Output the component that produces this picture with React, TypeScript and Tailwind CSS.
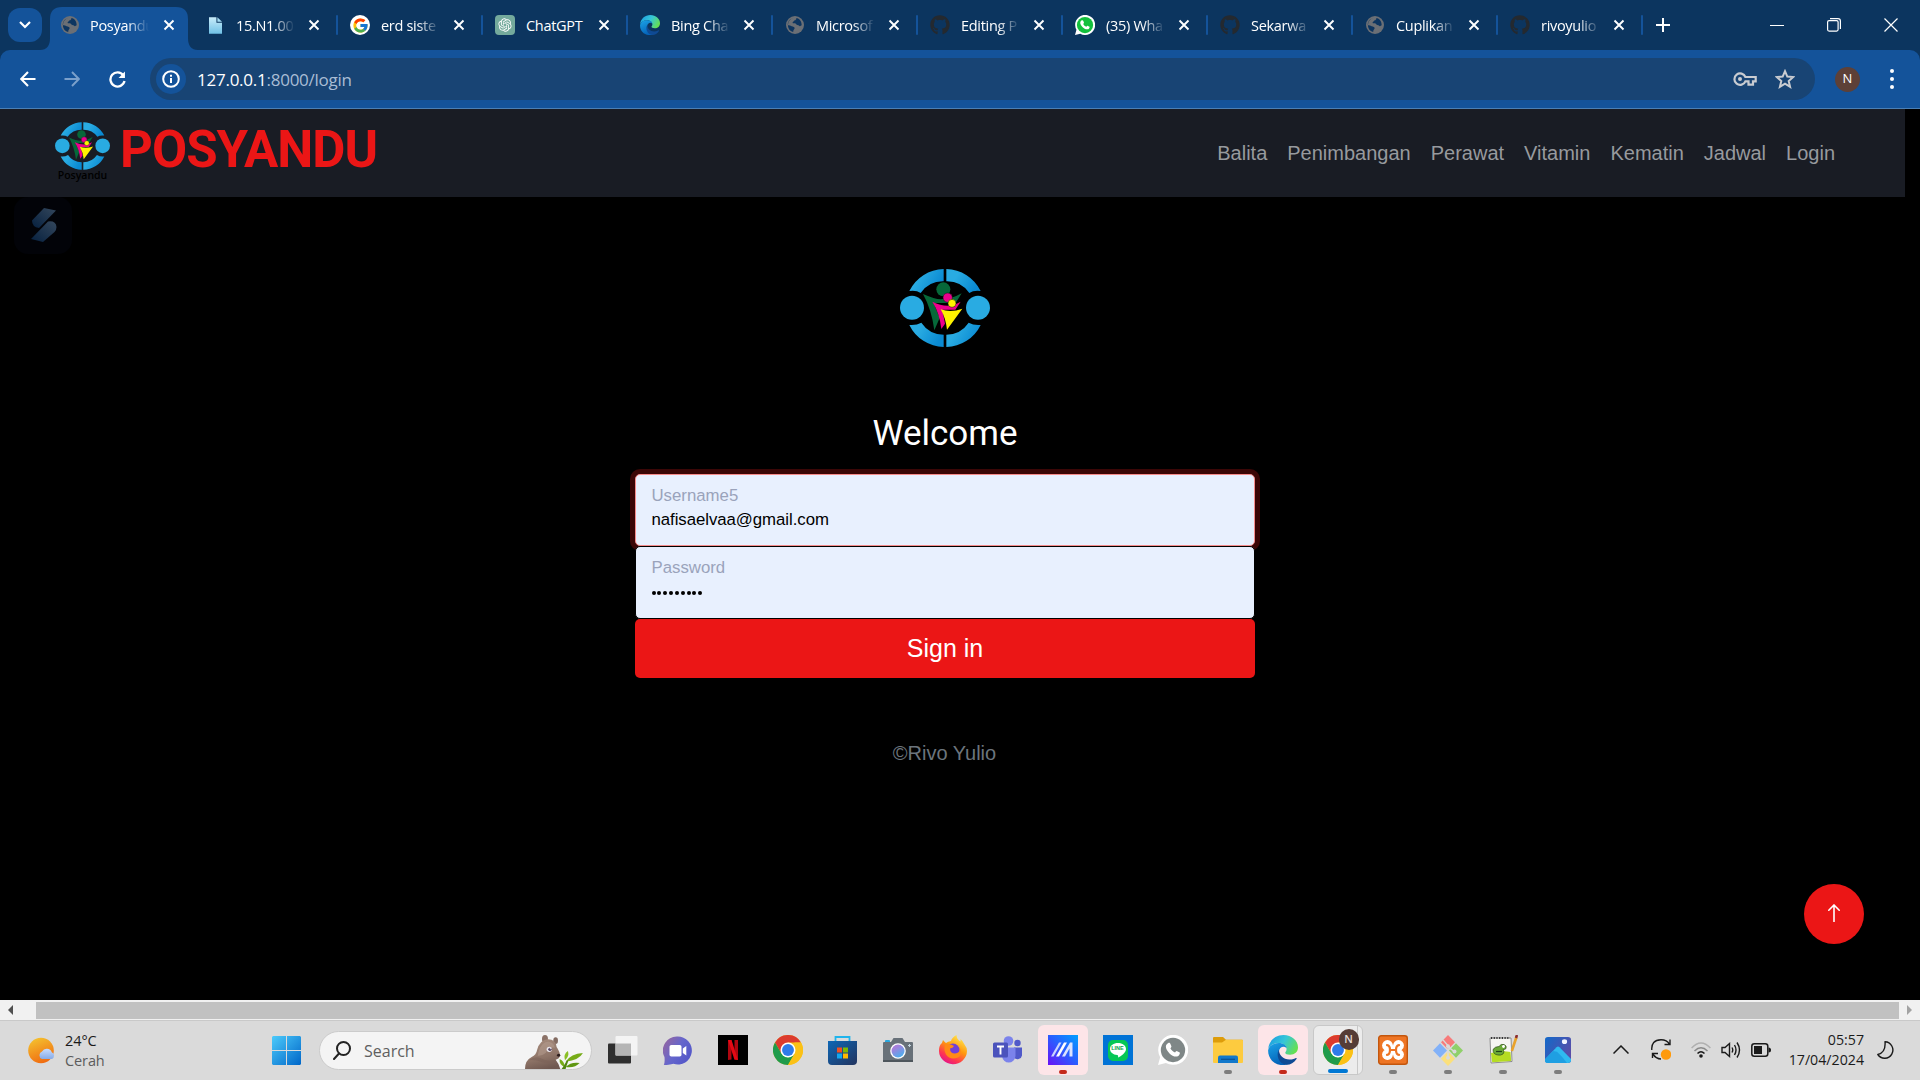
import React from "react";
import { FaGithub } from "react-icons/fa";
import { FcGoogle } from "react-icons/fc";
import { RiOpenaiFill } from "react-icons/ri";

type IconProps = { className?: string };

/* ---------- favicons and brand marks ---------- */

function Globe() {
  return (
    <svg viewBox="0 0 20 20" className="h-[18px] w-[18px]">
      <circle cx="10" cy="10" r="10" fill="#6b6f75" />
      <path
        d="M8 2.2C4 3 2 6.400 2 10c1.800.2 3 .6 4.200 1.400C8 12 9.800 12 9.600 13.600c-.2 1.400-1.800 1.600-1.600 4.200C3.600 17 1.400 12.400 2.400 8.400 3 5.200 5.200 2.800 8 2.200Z"
        fill="#0d3560"
      />
      <path
        d="M11.400 2.200c.6 1.400-.6 2.400-2.200 2.800-.6 1.200-2.200 1.600-1.800 2.800.6.8 2.800-.4 3.600 1 .6 1.200 2.600.8 3.400 1.800.8 1.400 1.800.6 3-.2C17.600 6 15.200 2.800 11.400 2.200Z"
        fill="#0d3560"
      />
    </svg>
  );
}

function FileIcon() {
  return (
    <svg viewBox="0 0 14 18" className="h-[17px] w-[13px]">
      <defs>
        <linearGradient id="file" x1="0" y1="0" x2="0" y2="1">
          <stop offset="0" stopColor="#c9ecfa" />
          <stop offset="1" stopColor="#6fc1e6" />
        </linearGradient>
      </defs>
      <path d="M0 0h8v6h6v12H0Z" fill="url(#file)" />
      <path d="M9 0l5 5H9Z" fill="#a4dcf3" />
    </svg>
  );
}

function GoogleIcon() {
  return (
    <span className="flex h-5 w-5 items-center justify-center rounded-full bg-white">
      <FcGoogle size={17} />
    </span>
  );
}

function ChatGptIcon() {
  return (
    <span className="flex h-5 w-5 items-center justify-center rounded bg-[#74aa9c] text-white">
      <RiOpenaiFill size={16} />
    </span>
  );
}

function EdgeIcon({ className }: IconProps) {
  return (
    <svg viewBox="0 0 32 32" className={className}>
      <defs>
        <linearGradient id="edgeTop" x1="0" y1="0.2" x2="1" y2="0.6">
          <stop offset="0" stopColor="#1b9de2" />
          <stop offset="0.5" stopColor="#36c6d8" />
          <stop offset="1" stopColor="#66e04f" />
        </linearGradient>
        <linearGradient id="edgeLeft" x1="0" y1="0" x2="0.4" y2="1">
          <stop offset="0" stopColor="#1ba4e8" />
          <stop offset="1" stopColor="#0562b8" />
        </linearGradient>
      </defs>
      <path d="M.2 15C1 6 8 0 16.500 0 25.500 0 32 6 32 13c0 5-3.600 8-8.400 8-3.600 0-5.200-1.200-5.200-2.200s1.400-1.400 1.400-4C19.800 11 16 8.400 11.500 8.400 6 8.400 1.500 11.500.2 15Z" fill="url(#edgeTop)" />
      <path d="M.1 16.500C.7 11.500 6 8.400 11.500 8.400c5 0 8.300 2.700 8.300 5.600-3-3-7.800-1-8.400 4-.6 6 4 11.600 10.400 13C11 35 0 28 .1 16.500Z" fill="url(#edgeLeft)" />
      <path d="M11.800 15.500c-.6 5.500 4.500 10.700 11 10.700 3.600 0 5.800-1.300 7-1.700.6-.2 1 .3.600 1-2.600 4-6.400 6.200-10.400 6.300C11.500 31.500 8 21 11.800 15.500Z" fill="#0f4a94" />
    </svg>
  );
}

function GithubIcon() {
  return <FaGithub size={20} className="text-[#24292f]" />;
}

function WhatsappIcon({ className, color }: IconProps & { color: string }) {
  return (
    <svg viewBox="0 0 32 32" preserveAspectRatio="none" className={className}>
      <path d="M0 32l2.300-8.300A16 16 0 1 1 8.400 29.800Z" fill="#fff" />
      <circle cx="16" cy="16" r="13" fill={color} />
      <path d="M11 8.500c1.200-.5 2 0 2.500 1.500l.8 2c.2.8-.8 1.800-1.100 2.200 1.300 2.400 2.600 3.500 5 4.500.5-.4 1-1.600 1.700-1.600l3.300 1.600c.6.7-.4 3.200-2 3.900-3 1.200-6.600-.8-8.900-3-2.500-2.400-4.100-5-3.900-7.500.2-2 1.600-3.200 2.600-3.600Z" fill="#fff" />
    </svg>
  );
}

function PosyanduMark({ className, id }: IconProps & { id: string }) {
  return (
    <svg viewBox="119 58 270 234" className={className}>
      <defs>
        <linearGradient id={id} x1="0" y1="0" x2="1" y2="0.4">
          <stop offset="0.35" stopColor="#29abe2" />
          <stop offset="1" stopColor="#0a8ad2" />
        </linearGradient>
      </defs>
      <circle cx="155" cy="174" r="36" fill="#29abe2" />
      <circle cx="353" cy="174" r="36" fill="#29abe2" />
      <path d="M147 124A117 117 0 0 1 250 58V95A82 82 0 0 0 181 130Q168 121 147 124Z" fill={"url(#" + id + ")"} />
      <path d="M361 124A117 117 0 0 0 258 58V95A82 82 0 0 1 327 130Q340 121 361 124Z" fill={"url(#" + id + ")"} />
      <path d="M147 226A117 117 0 0 0 250 292V255A82 82 0 0 1 183 219Q168 228 147 226Z" fill={"url(#" + id + ")"} />
      <path d="M361 226A117 117 0 0 1 258 292V255A82 82 0 0 0 325 219Q340 228 361 226Z" fill={"url(#" + id + ")"} />
      <path d="M188 133Q232 152 246 148Q270 150 304 131L286 160H220L238 205L222 242Q214 180 188 133Z" fill="#066839" />
      <path d="M216 156Q240 168 262 168Q280 168 301 156L285 180H246L254 222L243 238Q238 190 216 156Z" fill="#ec008c" />
      <path d="M241 179Q272 190 306 177L260 240Q256 205 241 179Z" fill="#fff200" />
      <circle cx="249" cy="119" r="21" fill="#066839" />
      <circle cx="262" cy="144" r="14" fill="#ec008c" stroke="#051a12" strokeWidth="1.500" />
      <circle cx="275" cy="161" r="12" fill="#fff200" stroke="#051a12" strokeWidth="1.500" />
    </svg>
  );
}

function CrossIcon({ className }: IconProps) {
  return (
    <svg viewBox="0 0 12 12" className={className} stroke="currentColor" strokeWidth="1.900" fill="none">
      <path d="M1.500 1.500l9 9M10.500 1.500l-9 9" />
    </svg>
  );
}

/* ---------- browser chrome ---------- */

const tabs: { title: string; icon: React.ReactNode }[] = [
  { title: "Posyandu", icon: <Globe /> },
  { title: "15.N1.00", icon: <FileIcon /> },
  { title: "erd siste", icon: <GoogleIcon /> },
  { title: "ChatGPT", icon: <ChatGptIcon /> },
  { title: "Bing Cha", icon: <EdgeIcon className="h-5 w-5" /> },
  { title: "Microsof", icon: <Globe /> },
  { title: "Editing P", icon: <GithubIcon /> },
  { title: "(35) Wha", icon: <WhatsappIcon color="#14c03c" className="h-5 w-5" /> },
  { title: "Sekarwa", icon: <GithubIcon /> },
  { title: "Cuplikan", icon: <Globe /> },
  { title: "rivoyulio", icon: <GithubIcon /> },
];

function Tab({ index, title, icon }: { index: number; title: string; icon: React.ReactNode }) {
  const active = index === 0;
  return (
    <div className="relative flex h-[50px] w-[145px] shrink-0 items-center">
      {active && (
        <svg viewBox="0 0 158 43" className="absolute -left-[10px] top-[7px] h-[43px] w-[158px]">
          <path d="M0 43Q10 43 10 31V12Q10 0 22 0H136Q148 0 148 12V31Q148 43 158 43Z" fill="#14539a" />
        </svg>
      )}
      <span className="relative ml-[10px] flex w-5 items-center justify-center">{icon}</span>
      <span
        className={
          (title === "ChatGPT" ? "" : "[mask-image:linear-gradient(to_right,black_62%,transparent_100%)] ") +
          (active ? "ml-[10px] mr-px " : "ml-[11px] ") +
          "relative mt-px w-[59px] whitespace-nowrap text-[14.500px] tracking-[-0.300px] text-white"
        }
      >
        {title}
      </span>
      <CrossIcon className="relative ml-[13px] h-3 w-3 shrink-0 text-white" />
      {index > 0 && <span className="ml-[16px] h-5 w-[2px] shrink-0 rounded bg-[#14539a]" />}
    </div>
  );
}

function TabStrip() {
  return (
    <div className="flex h-[50px] items-center bg-[#0c355f]">
      <div className="ml-2 mr-[8px] flex h-[34px] w-[34px] items-center justify-center rounded-xl bg-[#14539a]">
        <svg viewBox="0 0 12 8" className="h-[8px] w-[12px]" fill="none" stroke="#fff" strokeWidth="2.200">
          <path d="M1 1l5 5 5-5" />
        </svg>
      </div>
      {tabs.map((t, i) => (
        <Tab key={t.title} index={i} title={t.title} icon={t.icon} />
      ))}
      <svg viewBox="0 0 14 14" className="ml-[11px] h-[14px] w-[14px]" stroke="#fff" strokeWidth="2">
        <path d="M7 0v14M0 7h14" />
      </svg>
      <div className="ml-auto mr-[22px] flex items-center gap-[43px] text-white">
        <span className="h-px w-[14px] bg-white" />
        <svg viewBox="0 0 14 14" className="h-[14px] w-[14px]" fill="none" stroke="currentColor" strokeWidth="1.200">
          <rect x="0.600" y="2.600" width="10.500" height="10.500" rx="1.500" />
          <path d="M3 .6h8a2.400 2.400 0 0 1 2.400 2.400v8" />
        </svg>
        <svg viewBox="0 0 14 14" className="h-[14px] w-[14px]" fill="none" stroke="currentColor" strokeWidth="1.200">
          <path d="M.5.5l13 13M13.500.5l-13 13" />
        </svg>
      </div>
    </div>
  );
}

function Toolbar() {
  return (
    <div className="bg-[#0c355f]">
      <div className="flex h-[59px] items-center rounded-t-[10px] border-b border-[#4a7fb5] bg-[#14539a]">
        <svg viewBox="0 0 16 16" className="ml-5 h-4 w-4" fill="none" stroke="#fff" strokeWidth="2.100">
          <path d="M15.500 8H1.500M8 1L1.200 8 8 15" />
        </svg>
        <svg viewBox="0 0 16 16" className="ml-[28px] h-4 w-4" fill="none" stroke="#7ba0cb" strokeWidth="1.900">
          <path d="M.5 8h14M8 1l6.800 7L8 15" />
        </svg>
        <svg viewBox="0 0 16 16" className="ml-[29px] h-[17px] w-[17px]" fill="none" stroke="#fff" strokeWidth="2.200">
          <path d="M13.500 4A6.700 6.700 0 1 0 14.600 9.500" />
          <path d="M15 .5v6H9Z" fill="#fff" stroke="none" />
        </svg>
        <div className="ml-[24px] flex h-[42px] w-[1665px] items-center rounded-full bg-[#184474] pl-[6px]">
          <span className="flex h-[30px] w-[30px] items-center justify-center rounded-full bg-[#14539a]">
            <svg viewBox="0 0 18 18" className="h-[18px] w-[18px]" fill="none" stroke="#fff" strokeWidth="2">
              <circle cx="9" cy="9" r="7.800" />
              <path d="M9 8v5M9 4.700v2" />
            </svg>
          </span>
          <span className="ml-[11px] mt-px text-[17px] tracking-[-0.250px] text-[#a9bdd5]">
            <span className="text-white">127.0.0.1</span>:8000/login
          </span>
          <svg viewBox="0 0 24 14" className="ml-auto h-[14px] w-[24px]" fill="none" stroke="#c9ccd1" strokeWidth="2.200">
            <path d="M12.400 5A5.700 5.700 0 1 0 12.400 9.300H15.500V12.700H20V9.300H22.700V5Z" />
            <circle cx="7" cy="7" r="2" fill="#c9ccd1" stroke="none" />
          </svg>
          <svg viewBox="0 0 20 20" className="ml-[18px] mr-[20px] h-[20px] w-[20px]" fill="none" stroke="#c9ccd1" strokeWidth="2">
            <path d="M10 2.200l2.300 5.400 5.900.5-4.500 3.900 1.400 5.800L10 14.700 4.900 17.800 6.300 12 1.800 8.100l5.900-.5Z" />
          </svg>
        </div>
        <span className="ml-[20px] flex h-[25px] w-[25px] items-center justify-center rounded-full bg-[#5d4037] text-[13px] text-white">
          N
        </span>
        <div className="ml-[30px] flex flex-col gap-[4px]">
          <span className="h-1 w-1 rounded-full bg-white" />
          <span className="h-1 w-1 rounded-full bg-white" />
          <span className="h-1 w-1 rounded-full bg-white" />
        </div>
      </div>
    </div>
  );
}

/* ---------- page ---------- */

const links = ["Balita", "Penimbangan", "Perawat", "Vitamin", "Kematin", "Jadwal", "Login"];

function Navbar() {
  return (
    <nav className="flex h-[88px] w-[1905px] bg-[#191c24] pl-[55px] pr-[70px]">
      <div className="flex w-[55px] flex-col items-center pt-[13px]">
        <PosyanduMark id="markSmall" className="h-[48px] w-[55px]" />
        <span className="-mt-[2px] text-[10.500px] font-semibold leading-[14px] text-black">Posyandu</span>
      </div>
      <span className="ml-[10px] mt-[11px] font-[Roboto] text-[51px] font-bold leading-[60px] tracking-[-0.950px] text-[#eb1616]">
        POSYANDU
      </span>
      <div className="ml-auto flex items-center gap-5 font-['Liberation_Sans'] text-[20px] text-[#979a9e]">
        {links.map((l) => (
          <span key={l}>{l}</span>
        ))}
      </div>
    </nav>
  );
}

function GhostBadge() {
  return (
    <div className="absolute left-[14px] top-[88px] flex h-[57px] w-[58px] items-center justify-center rounded-[14px] bg-[#020308]">
      <svg viewBox="0 0 26 34" className="-mt-[2px] ml-px h-[34px] w-[26px]">
        <defs>
          <linearGradient id="ghost" x1="1" y1="0" x2="0" y2="1">
            <stop offset="0" stopColor="#34475c" />
            <stop offset="1" stopColor="#06203f" />
          </linearGradient>
        </defs>
        <path d="M13 0l12 2.500L8 20Q1 19 1 12.500Z" fill="url(#ghost)" />
        <path d="M17 13.500q8-1 8.500 5.500 0 3-2 5L12 34 0 31Z" fill="url(#ghost)" />
      </svg>
    </div>
  );
}

function LoginForm() {
  return (
    <div className="flex flex-col items-center font-['Liberation_Sans']">
      <PosyanduMark id="markLarge" className="mt-[72px] h-[78px] w-[90px]" />
      <h1 className="mt-[66px] pl-px font-[Roboto] text-[35px] leading-[42px] text-white">Welcome</h1>
      <div className="relative mt-[19px] flex h-[72px] w-[620px] flex-col rounded-[5px] border border-[#f58b8b] bg-[#e8f0fe] pl-4 pt-[8px] shadow-[0_0_0_5px_#3b0606]">
        <span className="text-[16.800px] leading-[26px] text-[#9aa3bb]">Username5</span>
        <span className="text-[16.800px] leading-[22px] tracking-[-0.050px] text-black">nafisaelvaa@gmail.com</span>
      </div>
      <div className="relative flex h-[73px] w-[620px] flex-col rounded-[5px] border border-black bg-[#e8f0fe] pl-4 pt-[8px]">
        <span className="text-[16.800px] leading-[26px] text-[#9aa3bb]">Password</span>
        <span className="mt-[10px] flex gap-[1.850px]">
          {Array.from({ length: 9 }, (_, i) => (
            <span key={i} className="h-1 w-1 rounded-full bg-black" />
          ))}
        </span>
      </div>
      <div className="flex h-[59px] w-[620px] items-center justify-center rounded-[5px] bg-[#eb1616] pl-px text-[25px] text-white">
        Sign in
      </div>
      <p className="mt-[60px] text-[20px] leading-[30px] text-[#6c757d]">©Rivo Yulio</p>
    </div>
  );
}

function Page() {
  return (
    <main className="relative h-[891px] overflow-hidden bg-black">
      <Navbar />
      <GhostBadge />
      <div className="w-[1889px]">
        <LoginForm />
      </div>
      <div className="absolute bottom-[56px] right-[56px] flex h-[60px] w-[60px] items-center justify-center rounded-full bg-[#eb1616]">
        <svg viewBox="0 0 12 18" className="-mt-[2px] h-[18px] w-[12px]" fill="none" stroke="#fff" strokeWidth="1.600" strokeLinecap="round">
          <path d="M6 17.500V1M.8 6.200L6 1l5.200 5.200" />
        </svg>
      </div>
    </main>
  );
}

function Scrollbar() {
  return (
    <div className="flex h-5 items-center bg-[#f1f1f1]">
      <span className="flex w-9 pl-2">
        <svg viewBox="0 0 5 10" className="h-[10px] w-[5px]"><path d="M5 0v10L0 5Z" fill="#505050" /></svg>
      </span>
      <span className="h-[17px] w-[1863px] bg-[#c1c1c1]" />
      <svg viewBox="0 0 5 10" className="ml-2 h-[10px] w-[5px]"><path d="M0 0v10l5-5Z" fill="#a3a3a3" /></svg>
    </div>
  );
}

/* ---------- taskbar ---------- */

function WeatherIcon() {
  return (
    <svg viewBox="0 0 28 28" className="h-[28px] w-[28px]">
      <defs>
        <linearGradient id="sun" x1="0.300" y1="0" x2="0.700" y2="1">
          <stop offset="0" stopColor="#f4c02e" />
          <stop offset="1" stopColor="#f0670f" />
        </linearGradient>
        <linearGradient id="cloud" x1="0" y1="0" x2="0" y2="1">
          <stop offset="0" stopColor="#c8dcff" />
          <stop offset="1" stopColor="#86abe8" />
        </linearGradient>
      </defs>
      <circle cx="13" cy="13.500" r="12.800" fill="url(#sun)" />
      <path d="M14 22a4 4 0 0 1 0-7.500 5.400 5.400 0 0 1 9.800.8A3.700 3.700 0 0 1 24 22Z" fill="url(#cloud)" />
    </svg>
  );
}

function WindowsIcon() {
  return (
    <svg viewBox="0 0 29 29" className="h-[29px] w-[29px]">
      <defs>
        <linearGradient id="win" x1="0" y1="0" x2="1" y2="1">
          <stop offset="0" stopColor="#4ccbfb" />
          <stop offset="1" stopColor="#0066c8" />
        </linearGradient>
      </defs>
      <path d="M1 0H14V14H0V1ZM15 0h13l1 1v13H15ZM0 15h14v14H1l-1-1ZM15 15h14v13l-1 1H15Z" fill="url(#win)" />
    </svg>
  );
}

function Bear() {
  return (
    <svg viewBox="78 42 176 102" className="h-[34px] w-[58.600px]">
      <defs>
        <linearGradient id="bear" x1="0.300" y1="0" x2="0.600" y2="1">
          <stop offset="0" stopColor="#a68b7c" />
          <stop offset="0.600" stopColor="#8f7568" />
          <stop offset="1" stopColor="#6f5850" />
        </linearGradient>
      </defs>
      <ellipse cx="138" cy="54" rx="9" ry="12" fill="#8b7267" />
      <ellipse cx="170" cy="59" rx="7" ry="10" fill="#836b61" />
      <path d="M78 144Q78 118 98 108Q112 102 114 88Q122 56 148 55Q170 56 173 78Q183 93 183 103Q182 114 170 116Q180 128 184 144Z" fill="url(#bear)" />
      <path d="M90 118Q104 106 122 110Q146 124 172 116Q156 130 130 124Q106 114 90 118Z" fill="#7b6359" opacity="0.600" />
      <path d="M120 88Q130 60 150 62Q164 64 168 80Q150 76 140 96Q128 106 116 104Q118 96 120 88Z" fill="#b89f92" opacity="0.500" />
      <ellipse cx="151" cy="85" rx="8" ry="8" fill="#ece8ee" />
      <circle cx="153" cy="85" r="5" fill="#4b3a57" />
      <circle cx="154" cy="83" r="1.800" fill="#fff" />
      <ellipse cx="179" cy="103" rx="5" ry="4.500" fill="#2c1d1d" />
      <g fill="#76ab17">
        <path d="M200 122Q216 98 252 96Q240 118 200 122Z" />
        <path d="M198 118Q192 100 207 90Q212 106 198 118Z" fill="#8abf25" />
        <path d="M198 138Q180 132 182 114Q196 120 198 138Z" />
        <path d="M200 138Q216 122 242 126Q228 142 200 138Z" fill="#5f9712" />
        <path d="M188 144Q196 134 204 118L208 120Q202 136 200 144Z" fill="#4f8510" />
      </g>
    </svg>
  );
}

function TaskView() {
  return (
    <svg viewBox="0 0 30 30" className="h-[30px] w-[30px]">
      <rect x="0" y="8.500" width="23" height="20" rx="1" fill="#2f2f2f" />
      <rect x="7.500" y="1" width="22" height="19.500" rx="1" fill="#f4f4f4" />
      <rect x="7.500" y="8.500" width="15.500" height="12" fill="#b5b5b5" />
    </svg>
  );
}

function ChatIcon() {
  return (
    <svg viewBox="0 0 29 29" className="h-[29px] w-[29px]">
      <defs>
        <linearGradient id="chat" x1="0.100" y1="0.200" x2="0.900" y2="0.700">
          <stop offset="0" stopColor="#8d66a8" />
          <stop offset="0.500" stopColor="#6566cc" />
          <stop offset="1" stopColor="#5558c9" />
        </linearGradient>
      </defs>
      <path d="M14.500.5a14 14 0 1 1-4 27.300Q5 29.500.8 28.800 2 27 1.500 21A14 14 0 0 1 14.500.5Z" fill="url(#chat)" />
      <rect x="6.500" y="9" width="12" height="11.500" rx="1.800" fill="#fff" />
      <path d="M19.800 12.500l3.500-2.500v9.500l-3.500-2.500Z" fill="#fff" />
    </svg>
  );
}

function NetflixIcon() {
  return (
    <svg viewBox="0 0 30 30" className="h-[30px] w-[30px]">
      <path d="M0 0h30v30H0Z" fill="#000" />
      <path d="M10 5h3.500v19.500L10 25ZM16.500 5H20v20l-3.500-.5Z" fill="#b00610" />
      <path d="M10 5h3.500L20 25l-3.600-.5Z" fill="#e50914" />
    </svg>
  );
}

function ChromeIcon() {
  return (
    <svg viewBox="0 0 48 48" className="h-[30px] w-[30px]">
      <circle cx="24" cy="24" r="24" fill="#fbc116" />
      <path d="M3.200 12A24 24 0 0 1 44.800 12H24L13.600 30Z" fill="#dc3b2e" />
      <path d="M3.200 12A24 24 0 0 0 24 48L34.400 30 24 36 13.600 30Z" fill="#1f9b4b" />
      <path d="M44.800 12A24 24 0 0 1 24 48L34.400 30V12Z" fill="#fbc116" />
      <circle cx="24" cy="24" r="12" fill="#fff" />
      <circle cx="24" cy="24" r="9.500" fill="#2f7bea" />
    </svg>
  );
}

function StoreIcon() {
  return (
    <svg viewBox="0 0 29 29" className="h-[29px] w-[29px]">
      <defs>
        <linearGradient id="store" x1="0" y1="0" x2="1" y2="1">
          <stop offset="0" stopColor="#0f67b5" />
          <stop offset="1" stopColor="#22345f" />
        </linearGradient>
      </defs>
      <path d="M7.500 6V1h14v5" fill="none" stroke="#1fb4ec" strokeWidth="1.800" />
      <path d="M0 5h29v20a4 4 0 0 1-4 4H4a4 4 0 0 1-4-4Z" fill="url(#store)" />
      <path d="M9 11.500h5v5H9Z" fill="#f25022" />
      <path d="M15 11.500h5v5h-5Z" fill="#7fba00" />
      <path d="M9 17.500h5v5H9Z" fill="#13a8ef" />
      <path d="M15 17.500h5v5h-5Z" fill="#ffb900" />
    </svg>
  );
}

function CameraIcon() {
  return (
    <svg viewBox="0 0 30 30" className="h-[30px] w-[30px]">
      <defs>
        <linearGradient id="lens" x1="0.200" y1="0" x2="0.800" y2="1">
          <stop offset="0.200" stopColor="#a77fdc" />
          <stop offset="1" stopColor="#43b4f0" />
        </linearGradient>
      </defs>
      <rect x="2" y="5" width="5" height="3" rx="1" fill="#29a8e0" />
      <path d="M1 7h7l2.500-4h9L22 7h7a1 1 0 0 1 1 1v18a1 1 0 0 1-1 1H1a1 1 0 0 1-1-1V8a1 1 0 0 1 1-1Z" fill="#687179" />
      <path d="M0 25h30v2H0Z" fill="#4e565c" />
      <circle cx="15" cy="16" r="7.800" fill="#fff" />
      <circle cx="15" cy="16" r="6.500" fill="url(#lens)" />
      <path d="M26.500 9v3M25 10.500h3" stroke="#c2d5df" strokeWidth="1" />
    </svg>
  );
}

function FirefoxIcon() {
  return (
    <svg viewBox="0 0 28 30" className="h-[30px] w-[28px]">
      <defs>
        <linearGradient id="ff" x1="0.800" y1="0.100" x2="0.300" y2="1">
          <stop offset="0" stopColor="#ffe14a" />
          <stop offset="0.400" stopColor="#ff980e" />
          <stop offset="0.750" stopColor="#ff3750" />
          <stop offset="1" stopColor="#e3138c" />
        </linearGradient>
      </defs>
      <path d="M4 5q1.500 2 3 3 2-1.500 5-2 1-3.500 5.500-6 0 4 4 6.500V4q2.500 2 4 5.500 2.500 3 2.500 6.500A14 13.500 0 0 1 0 15.500Q0 10 3 8Z" fill="url(#ff)" />
      <circle cx="14" cy="15" r="6.500" fill="#7040d8" />
      <path d="M6 10q5-2 9 1-1 2-4 2.500 0 5 5 5 5-.5 5-5 3 6-2 9-8 3-12-3-2.500-5-1-9.500Z" fill="#ff8a16" />
    </svg>
  );
}

function TeamsIcon() {
  return (
    <svg viewBox="0 0 29 28" className="h-[28px] w-[29px]">
      <circle cx="24.500" cy="7" r="3.200" fill="#5059c9" />
      <path d="M21 11.500h8v8a4.500 4.500 0 0 1-8 2Z" fill="#5059c9" />
      <circle cx="15.500" cy="5" r="4.800" fill="#7b83eb" />
      <path d="M9 11.500h13.500V20a6.800 7.500 0 0 1-13.500 0Z" fill="#7b83eb" />
      <rect x="0" y="6.500" width="15" height="15" rx="1.500" fill="#4b53bc" />
      <path d="M4 10.500h7M7.500 10.500v8" stroke="#fff" strokeWidth="1.900" />
    </svg>
  );
}

function MyAsusIcon() {
  return (
    <svg viewBox="0 0 30 30" className="h-[30px] w-[30px]">
      <defs>
        <linearGradient id="asus" x1="1" y1="0" x2="0" y2="1">
          <stop offset="0" stopColor="#00a0ff" />
          <stop offset="0.500" stopColor="#2b5cff" />
          <stop offset="1" stopColor="#6a10f5" />
        </linearGradient>
      </defs>
      <path d="M0 0h30v30H0Z" fill="url(#asus)" />
      <path d="M3 21.500L11 7.500h2.500L5.500 21.500Z" fill="#c9d4ff" />
      <path d="M8 21.500L16 7.500h3L11 21.500Z" fill="#fff" />
      <path d="M14 21.500L22 7.500h2.500V21.500h-3V13.500L17 21.500Z" fill="#dbe3ff" />
    </svg>
  );
}

function LineIcon() {
  return (
    <span className="flex h-[30px] w-[30px] items-center justify-center bg-[#0073d6]">
      <span className="relative flex h-[21px] w-[20px] items-center justify-center rounded-[5px] bg-[#06c755]">
        <svg viewBox="0 0 16 16" className="absolute h-4 w-4">
          <path d="M8 1c4.400 0 8 2.500 8 6 0 3.800-5 7.400-8 8.500.3-1.500.2-2.200-.8-2.400C3 12.700 0 10 0 7c0-3.500 3.600-6 8-6Z" fill="#fff" />
        </svg>
        <span className="relative -mt-[2px] font-['Liberation_Sans'] text-[5.500px] font-bold leading-none text-[#06a548]">LINE</span>
      </span>
    </span>
  );
}

function FolderIcon() {
  return (
    <svg viewBox="0 0 30 28" preserveAspectRatio="none" className="h-[26px] w-[30px]">
      <path d="M0 1a1 1 0 0 1 1-1h9l3 3h16a1 1 0 0 1 1 1v8H0Z" fill="#dd9c0a" />
      <path d="M0 6h9l4-3h16a1 1 0 0 1 1 1v23a1 1 0 0 1-1 1H1a1 1 0 0 1-1-1Z" fill="#fdcb3f" />
      <path d="M5 28v-6a2 2 0 0 1 2-2h16a2 2 0 0 1 2 2v6Z" fill="#1178cb" />
      <path d="M8 24h14" stroke="#0b4f92" strokeWidth="1.300" />
    </svg>
  );
}

function XamppIcon() {
  return (
    <svg viewBox="0 0 30 30" className="h-[30px] w-[30px]">
      <rect x="0.700" y="0.700" width="28.600" height="28.600" rx="2.500" fill="#ee7524" stroke="#c3560d" strokeWidth="1.400" />
      <g fill="#fff">
        <circle cx="9.500" cy="10.500" r="5.400" />
        <circle cx="20.500" cy="10.500" r="5.400" />
        <circle cx="9.500" cy="19.500" r="5.400" />
        <circle cx="20.500" cy="19.500" r="5.400" />
        <path d="M7.500 10.500h15v9h-15Z" />
      </g>
      <g stroke="#ee7524" strokeWidth="2.200" strokeLinecap="round" fill="none">
        <path d="M9 10.200Q12 10.500 12 15Q12 19.500 9 19.800M21 10.200Q18 10.500 18 15Q18 19.500 21 19.800M12 15h6" />
      </g>
      <path d="M14 5.500h2L15 9ZM14 24.500h2L15 21Z" fill="#ee7524" />
    </svg>
  );
}

function GitIcon() {
  return (
    <svg viewBox="0 0 30 32" preserveAspectRatio="none" className="h-[31px] w-[30px]">
      <path d="M15 0l7 7.500-7 7.500-7-7.500Z" fill="#f77b7b" />
      <path d="M7 8.500l7 7.500-7 7.500L0 16Z" fill="#82b1f8" />
      <path d="M23 8.500l7 7.500-7 7.500-7-7.500Z" fill="#8fd06a" />
      <path d="M15 17l7 7.500L15 32l-7-7.500Z" fill="#fbe07c" />
      <path d="M10 5l5 6v13M15 12l6 5" stroke="#dadada" strokeWidth="1.500" fill="none" />
      <circle cx="15" cy="11.500" r="2" fill="#dadada" />
      <circle cx="21.500" cy="17" r="2" fill="#dadada" />
      <circle cx="15" cy="23.500" r="2" fill="#dadada" />
    </svg>
  );
}

function NotepadIcon() {
  return (
    <svg viewBox="0 0 30 30" className="h-[30px] w-[30px]">
      <path d="M2 3h21l1 23.500L3 28Z" fill="#f6f6f2" stroke="#777" strokeWidth="0.800" />
      <path d="M3 3h19" stroke="#333" strokeWidth="1.800" strokeDasharray="1.200 1.500" />
      <path d="M3 18q10-3 19.500-1l.7 9-19 1.200Z" fill="#b5dc22" />
      <path d="M5 14.500q2-3 6-3 2-3 5-2 3 1 2 4-1 1-3 1.200 2 2 0 4.300-2 1.500-5 1-5-.5-5-5.500Z" fill="#6bab35" stroke="#2e4a1b" strokeWidth="0.700" />
      <circle cx="15.500" cy="11.500" r="1.400" fill="#fff" />
      <path d="M8 16.500h6" stroke="#21401a" strokeWidth="1.200" />
      <path d="M28.300 2.500L23.800 16" stroke="#e9a22b" strokeWidth="2.600" />
      <path d="M29 0L28 3" stroke="#8b2f2f" strokeWidth="2.600" />
    </svg>
  );
}

function PhotosIcon() {
  return (
    <svg viewBox="0 0 26 28" preserveAspectRatio="none" className="h-[26px] w-[26px]">
      <defs>
        <linearGradient id="photo" x1="0" y1="0" x2="1" y2="0.600">
          <stop offset="0" stopColor="#1269c9" />
          <stop offset="1" stopColor="#5a4da8" />
        </linearGradient>
        <clipPath id="photoClip"><rect width="26" height="28" rx="3" /></clipPath>
      </defs>
      <g clipPath="url(#photoClip)">
        <path d="M0 0h26v28H0Z" fill="url(#photo)" />
        <path d="M0 24L11.500 11q1.500-1.500 3 0L28 26v4H0Z" fill="#2fb9f0" />
        <path d="M8 15l-8 9v4h22Q18 22 12 16Z" fill="#1f9fe2" />
      </g>
      <circle cx="19.500" cy="5" r="2.600" fill="#f1f4ff" />
    </svg>
  );
}

type TaskbarEntry = { name: string; icon: React.ReactNode; tile?: "pink" | "white"; mark?: "red" | "gray" | "blue" };

const apps: TaskbarEntry[] = [
  { name: "task view", icon: <TaskView /> },
  { name: "chat", icon: <ChatIcon /> },
  { name: "netflix", icon: <NetflixIcon /> },
  { name: "chrome", icon: <ChromeIcon /> },
  { name: "store", icon: <StoreIcon /> },
  { name: "camera", icon: <CameraIcon /> },
  { name: "firefox", icon: <FirefoxIcon /> },
  { name: "teams", icon: <TeamsIcon /> },
  { name: "myasus", icon: <MyAsusIcon />, tile: "pink", mark: "red" },
  { name: "line", icon: <LineIcon /> },
  { name: "whatsapp", icon: <WhatsappIcon color="#7f8787" className="h-[30px] w-[30px]" /> },
  { name: "explorer", icon: <FolderIcon />, mark: "gray" },
  { name: "edge", icon: <EdgeIcon className="h-[30px] w-[30px]" />, tile: "pink", mark: "red" },
  { name: "chrome profile", icon: <ChromeIcon />, tile: "white", mark: "blue" },
  { name: "xampp", icon: <XamppIcon />, mark: "gray" },
  { name: "git", icon: <GitIcon />, mark: "gray" },
  { name: "notepad", icon: <NotepadIcon />, mark: "gray" },
  { name: "photos", icon: <PhotosIcon />, mark: "gray" },
];

const tileClass = { pink: "bg-[#fde5e8]", white: "border border-[#c8c8c8] bg-[#ececec]" };
const markClass = { red: "w-2 bg-[#c42b1c]", gray: "w-2 bg-[#7d7d7d]", blue: "w-5 bg-[#0078d4]" };

function TaskbarApp({ app }: { app: TaskbarEntry }) {
  return (
    <div className="flex w-[55px] shrink-0 justify-center">
      <div
        className={
          "relative flex h-[50px] w-[50px] items-center justify-center rounded-md " + (app.tile ? tileClass[app.tile] : "")
        }
      >
        {app.icon}
        {app.tile === "white" && (
          <>
            <span className="absolute -top-px right-[4px] h-[50px] w-px bg-[#c8c8c8]" />
            <span className="absolute right-[3px] top-[3px] flex h-[21px] w-[20px] items-center justify-center rounded-full bg-[#553c36] text-[11px] font-semibold text-[#e5dcda]">
              N
            </span>
          </>
        )}
        {app.mark && <span className={"absolute bottom-[1px] h-1 rounded-full " + markClass[app.mark]} />}
      </div>
    </div>
  );
}

function Tray() {
  return (
    <div className="-mt-[2px] ml-auto flex items-center text-[#1a1a1a]">
      <svg viewBox="0 0 16 9" className="h-[9px] w-4" fill="none" stroke="currentColor" strokeWidth="1.500">
        <path d="M.5 8.500L8 1l7.500 7.500" />
      </svg>
      <svg viewBox="0 0 20 21" className="ml-[22px] h-[21px] w-5" fill="none" stroke="currentColor" strokeWidth="1.400">
        <path d="M.8 11Q0 1 10 .8q6 0 8.500 4.500M19 .5v5h-5.500M1.500 19v-4.500H7M1.500 14.500Q5 20 10 20" />
        <circle cx="15" cy="15.500" r="5.200" fill="#ff9a0c" stroke="none" />
      </svg>
      <svg viewBox="0 0 20 16" className="ml-[20px] h-4 w-5" fill="none" strokeWidth="1.500">
        <path d="M.6 6Q10-4 19.400 6" stroke="#b0b0b0" />
        <path d="M3.500 9q6.500-6.500 13 0" stroke="#8a8a8a" />
        <path d="M6.500 11.500q3.500-3.500 7 0" stroke="currentColor" />
        <circle cx="10" cy="14" r="1.800" fill="currentColor" />
      </svg>
      <svg viewBox="0 0 20 18" className="ml-[10px] h-[18px] w-5" fill="none" stroke="currentColor" strokeWidth="1.400">
        <path d="M1 6.500h3l4.500-4v13l-4.500-4H1Z" />
        <path d="M11 6.500q1.500 2.500 0 5M13.500 4q3 5 0 10M16 1.500q5 7.500 0 15" />
      </svg>
      <svg viewBox="0 0 20 14" className="ml-[10px] h-[14px] w-5" fill="none" stroke="currentColor" strokeWidth="1.500">
        <rect x="0.800" y="0.800" width="16" height="12.400" rx="2.500" />
        <path d="M3 3h8v8H3Z" fill="currentColor" stroke="none" />
        <path d="M17.500 4.500q2.500 0 2.500 2.500t-2.500 2.500Z" fill="currentColor" stroke="none" />
      </svg>
      <div className="ml-[17px] flex w-[76px] flex-col items-end whitespace-nowrap text-[14.200px] leading-5">
        <span>05:57</span>
        <span>17/04/2024</span>
      </div>
      <svg viewBox="0 0 17 18" className="ml-[13px] mr-[26px] h-[18px] w-[17px]" fill="none" stroke="currentColor" strokeWidth="1.400" strokeLinejoin="round">
        <path d="M8 .8A8.200 8.200 0 1 1 .8 13.500Q9 11.500 8 .8Z" />
      </svg>
    </div>
  );
}

function Taskbar() {
  return (
    <footer className="flex h-[60px] items-center border-t border-[#c9c9c9] bg-[#dadada]">
      <div className="flex w-[272px] items-center pl-[28px]">
        <WeatherIcon />
        <div className="ml-[9px] flex flex-col text-[14.500px] leading-5 tracking-[-0.100px]">
          <span className="text-[#1a1a1a]">24°C</span>
          <span className="text-[#5c5c5c]">Cerah</span>
        </div>
      </div>
      <WindowsIcon />
      <div className="ml-[18px] flex h-[39px] w-[273px] items-center rounded-full border border-[#cbcbcb] bg-[#f4f4f4] pl-[13px] pr-[7px]">
        <svg viewBox="0 0 18 19" className="h-[19px] w-[18px]" fill="none" stroke="#222" strokeWidth="2">
          <circle cx="10.500" cy="7.500" r="6.500" />
          <path d="M6 12.500L1 18" strokeLinecap="round" />
        </svg>
        <span className="ml-[13px] mt-px text-[16px] text-[#5f5f5f]">Search</span>
        <span className="ml-auto self-end"><Bear /></span>
      </div>
      <div className="-mt-px ml-[3px] flex">
        {apps.map((a) => (
          <TaskbarApp key={a.name} app={a} />
        ))}
      </div>
      <Tray />
    </footer>
  );
}

export default function App() {
  return (
    <div className="h-[1080px] w-[1920px] overflow-hidden bg-black font-['Open_Sans',sans-serif]">
      <TabStrip />
      <Toolbar />
      <Page />
      <Scrollbar />
      <Taskbar />
    </div>
  );
}
